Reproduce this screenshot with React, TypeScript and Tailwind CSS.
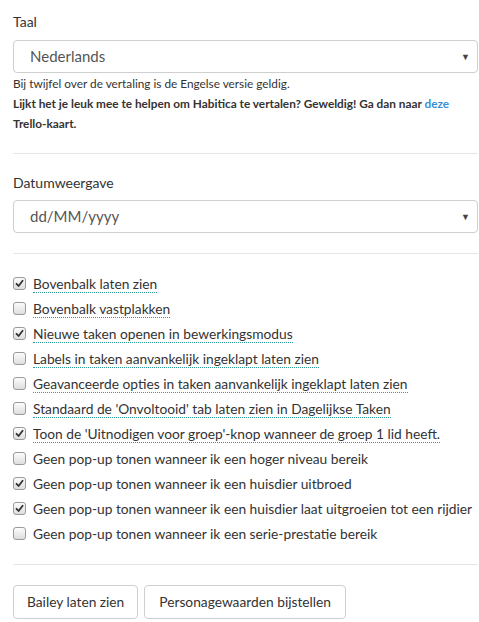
import React from 'react';

const options: { label: string; checked: boolean; tip: boolean }[] = [
  { label: 'Bovenbalk laten zien', checked: true, tip: true },
  { label: 'Bovenbalk vastplakken', checked: false, tip: true },
  { label: 'Nieuwe taken openen in bewerkingsmodus', checked: true, tip: true },
  { label: 'Labels in taken aanvankelijk ingeklapt laten zien', checked: false, tip: true },
  { label: 'Geavanceerde opties in taken aanvankelijk ingeklapt laten zien', checked: false, tip: true },
  { label: "Standaard de 'Onvoltooid' tab laten zien in Dagelijkse Taken", checked: false, tip: true },
  { label: "Toon de 'Uitnodigen voor groep'-knop wanneer de groep 1 lid heeft.", checked: true, tip: true },
  { label: 'Geen pop-up tonen wanneer ik een hoger niveau bereik', checked: false, tip: false },
  { label: 'Geen pop-up tonen wanneer ik een huisdier uitbroed', checked: true, tip: false },
  { label: 'Geen pop-up tonen wanneer ik een huisdier laat uitgroeien tot een rijdier', checked: true, tip: false },
  { label: 'Geen pop-up tonen wanneer ik een serie-prestatie bereik', checked: false, tip: false },
];

function Select({ value }: { value: string }) {
  return (
    <div className="h-[33px] w-full rounded-[4px] border border-[#cfcfcf] bg-white flex items-center justify-between pl-[16px] pr-[7px]">
      <span className="text-[15px] text-[#555]">{value}</span>
      <span className="text-[9px] text-[#444] leading-none">▼</span>
    </div>
  );
}

function Checkbox({ checked }: { checked: boolean }) {
  return (
    <span className="w-[13px] h-[13px] shrink-0 rounded-[3px] border border-[#9a9a9a] bg-gradient-to-b from-[#fcfcfc] to-[#dedede] flex items-center justify-center">
      {checked && (
        <svg width="9" height="9" viewBox="0 0 9 9">
          <path d="M1.5 4.8 L3.6 7 L7.6 1.8" fill="none" stroke="#333" strokeWidth="1.8" strokeLinecap="round" strokeLinejoin="round" />
        </svg>
      )}
    </span>
  );
}

export default function App() {
  return (
    <div className="w-[479px] h-[622px] overflow-hidden bg-white text-[#333] pl-[13px] pr-[1px] pt-[12px]" style={{ fontFamily: 'Lato, "Open Sans", sans-serif' }}>
      <div className="text-[14px] leading-[20px]">Taal</div>
      <div className="mt-[8px]">
        <Select value="Nederlands" />
      </div>
      <div className="text-[11.8px] leading-[20px] mt-[1px]">Bij twijfel over de vertaling is de Engelse versie geldig.</div>
      <div className="text-[11.8px] leading-[20px] font-bold">
        Lijkt het je leuk mee te helpen om Habitica te vertalen? Geweldig! Ga dan naar{' '}
        <span className="text-[#3a8fd6]">deze</span> Trello-kaart.
      </div>

      <div className="h-px bg-[#e5e5e5] mt-[19px]" />

      <div className="text-[14px] leading-[20px] mt-[19px]">Datumweergave</div>
      <div className="mt-[7px]">
        <Select value="dd/MM/yyyy" />
      </div>

      <div className="h-px bg-[#e5e5e5] mt-[20px]" />

      <div className="mt-[17px] flex flex-col">
        {options.map((o) => (
          <div key={o.label} className="h-[25px] flex items-center gap-[7px]">
            <Checkbox checked={o.checked} />
            <span
              className={`text-[13.75px] leading-[17px] whitespace-nowrap ${o.tip ? 'border-b border-dotted border-[#2b9c9c]' : 'border-b border-transparent'}`}
            >
              {o.label}
            </span>
          </div>
        ))}
      </div>

      <div className="h-px bg-[#e5e5e5] mt-[18px]" />

      <div className="mt-[20px] flex gap-[6px]">
        <button type="button" className="h-[34px] px-[13px] rounded-[4px] border border-[#cfcfcf] bg-white text-[13.75px] text-[#333]">
          Bailey laten zien
        </button>
        <button type="button" className="h-[34px] px-[14px] rounded-[4px] border border-[#cfcfcf] bg-white text-[13.75px] text-[#333]">
          Personagewaarden bijstellen
        </button>
      </div>
    </div>
  );
}
